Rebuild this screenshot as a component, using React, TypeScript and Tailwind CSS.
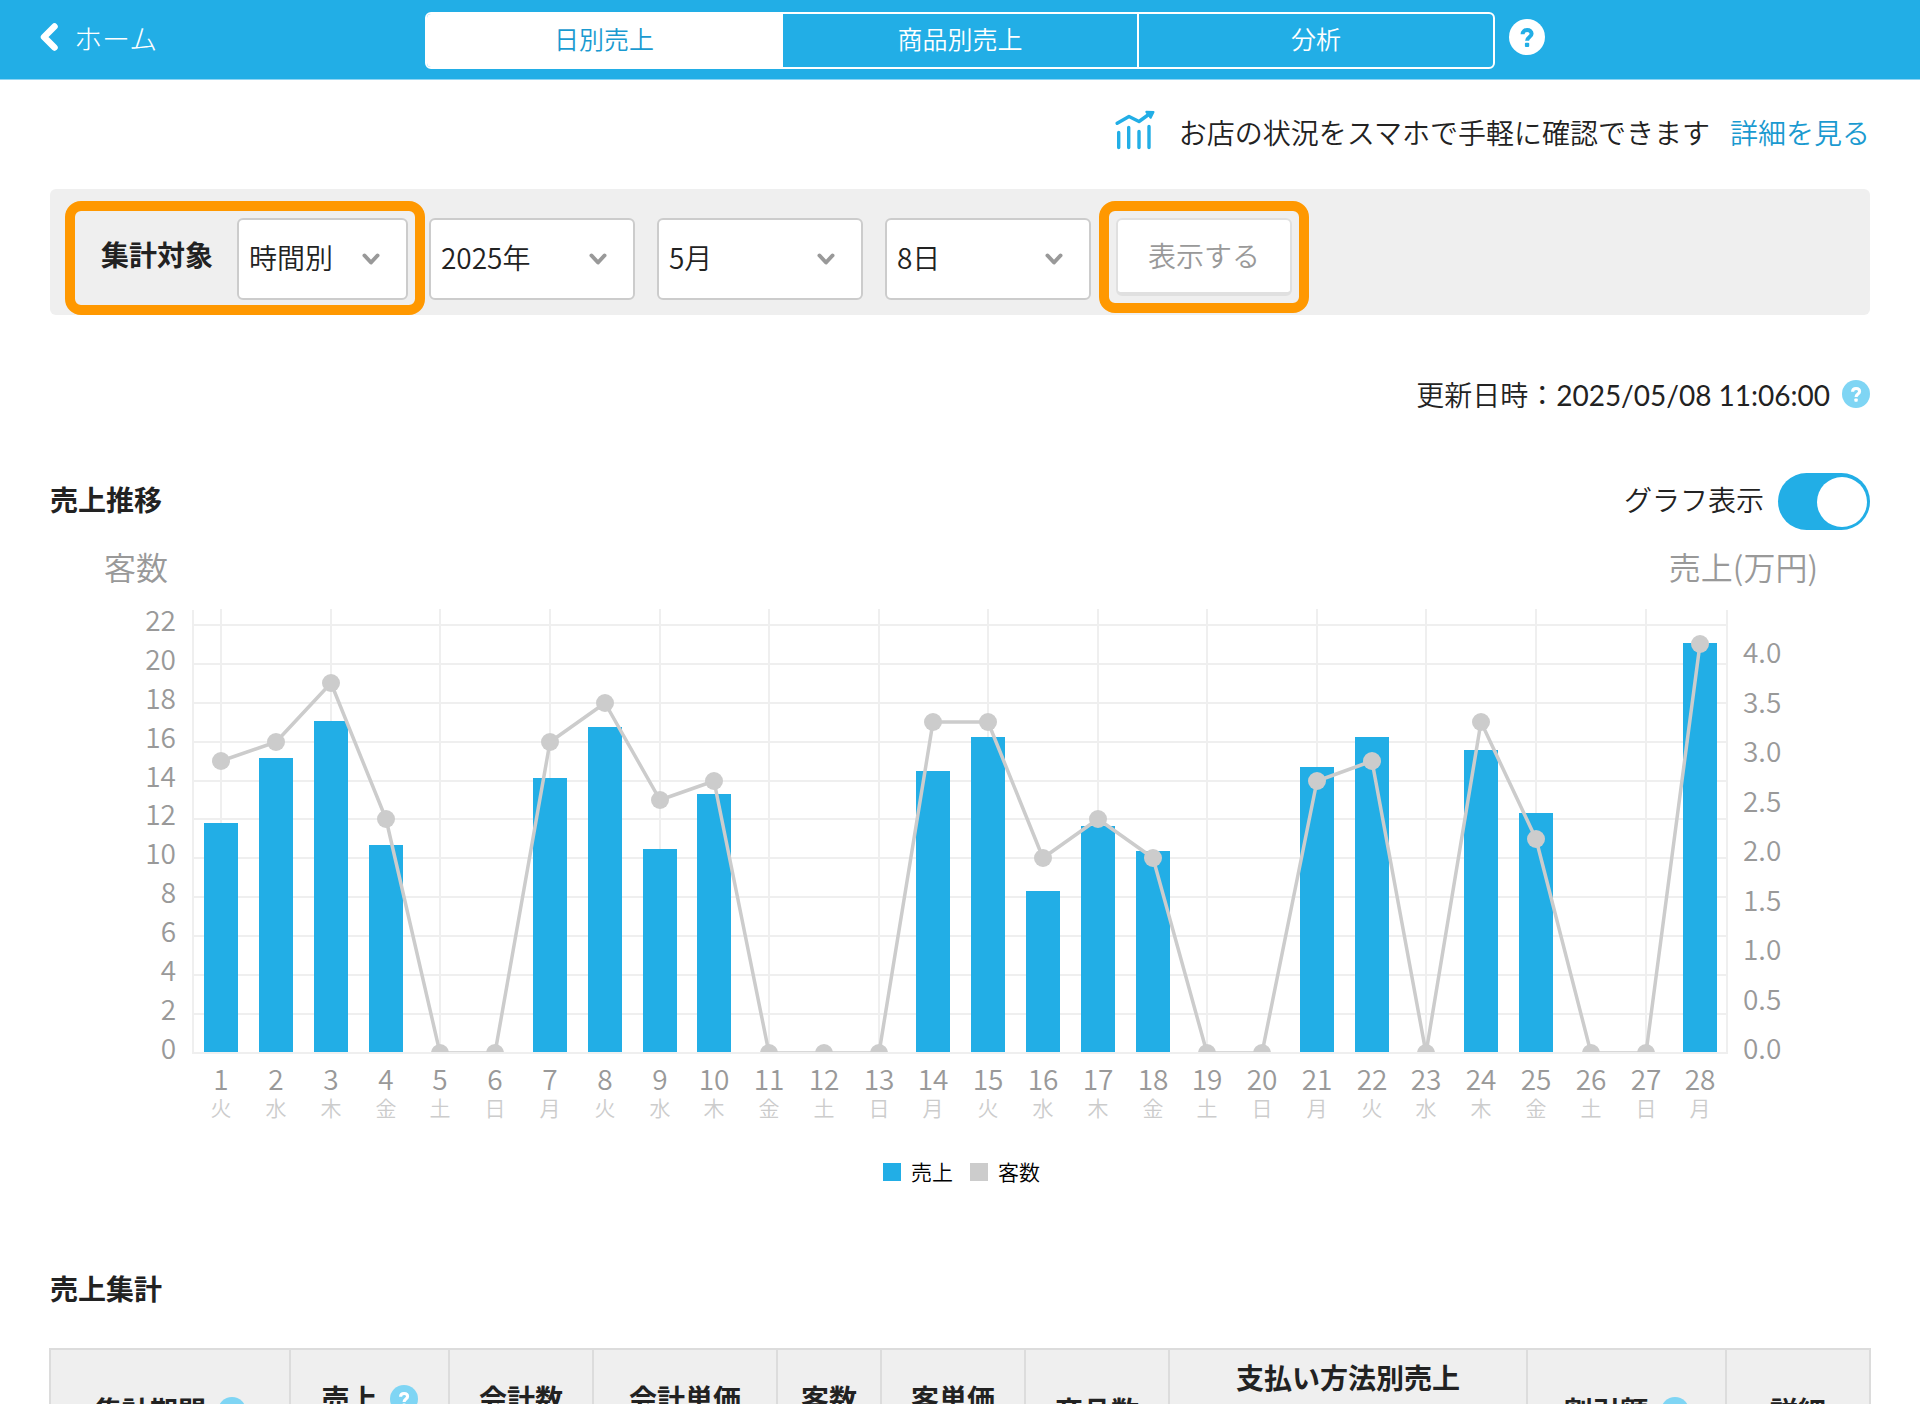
import { useState } from "react";

const bars: (number | null)[] = [
  2.32, 2.98, 3.35, 2.1, null, null, 2.78, 3.29, 2.06, 2.62, null, null, null, 2.85, 3.19, 1.64, 2.29, 2.04,
  null, null, 2.89, 3.19, null, 3.06, 2.42, null, null, 4.14,
];
const guests = [
  15, 16, 19, 12, 0, 0, 16, 18, 13, 14, 0, 0, 0, 17, 17, 10, 12, 10, 0, 0, 14, 15, 0, 17, 11, 0, 0, 21,
];
const weekdays = ["火", "水", "木", "金", "土", "日", "月"];

const BASE = 513;
const dayX = (i: number) => Math.round(171.3 + i * 54.78);
const guestY = (n: number) => Math.round(BASE - n * 19.46);
const salesY = (v: number) => Math.round(BASE - v * 99);

function Help({ className, fg }: { className: string; fg: string }) {
  return (
    <button type="button" aria-label="ヘルプ" className={`block shrink-0 rounded-full ${className}`}>
      <svg viewBox="0 0 36 36" className="block size-full" fill="none">
        <path
          d="M13.6 15.2c0-2.6 1.9-4.2 4.5-4.2s4.500 1.500 4.500 3.800c0 3.200-4.500 3.200-4.500 6.900"
          stroke={fg}
          strokeWidth="4"
        />
        <rect x="15.9" y="23.800" width="4.300" height="4.300" rx="1" fill={fg} />
      </svg>
    </button>
  );
}

function Picker({ label, value, options, className }: { label: string; value: string; options: string[]; className: string }) {
  return (
    <div className={`relative ${className}`}>
      <select
        aria-label={label}
        defaultValue={value}
        className="h-[82px] w-full appearance-none rounded-md border-2 border-[#ccc] bg-white pr-12 pb-[5px] pl-[10px] font-['Noto_Sans_CJK_JP',sans-serif] text-[28px] text-[#222]"
      >
        {options.map((o) => (
          <option key={o}>{o}</option>
        ))}
      </select>
      <svg
        viewBox="0 0 18 14"
        className="pointer-events-none absolute top-[34px] right-7 h-[14px] w-[18px]"
        fill="none"
        stroke="#999"
        strokeWidth="4"
        strokeLinecap="round"
        strokeLinejoin="round"
      >
        <path d="M2.500 3.500 9 10.500 15.500 3.500" />
      </svg>
    </div>
  );
}

function Chart() {
  const points = guests.map((g, i) => `${dayX(i)},${guestY(g)}`).join(" ");
  return (
    <svg
      viewBox="0 0 1820 660"
      className="block w-full font-['Noto_Sans_CJK_JP',sans-serif]"
      role="img"
      aria-label="売上推移グラフ"
    >
      <defs>
        <clipPath id="plot">
          <rect x="140" y="60" width="1540" height="452" />
        </clipPath>
      </defs>
      <g fill="#999" fontSize="32">
        <text x="54" y="40">客数</text>
        <text x="1768" y="40" textAnchor="end">売上(万円)</text>
      </g>
      <g stroke="#efefef" strokeWidth="2" fill="none">
        {Array.from({ length: 11 }, (_, i) => (
          <path key={i} d={`M143 ${guestY(2 + i * 2)}H1677`} />
        ))}
        {guests.map((_, i) => (i % 2 === 0 ? <path key={i} d={`M${dayX(i)} 69V512`} /> : null))}
        <path d="M143 70V513H1677V70" />
      </g>
      <g clipPath="url(#plot)">
        {bars.map((v, i) =>
          v === null ? null : (
            <rect key={i} x={dayX(i) - 17} y={salesY(v)} width="34" height={BASE - salesY(v)} fill="#22aee6" />
          ),
        )}
        <polyline points={points} fill="none" stroke="#ccc" strokeWidth="3.500" strokeLinejoin="round" />
        {guests.map((g, i) => (
          <circle key={i} cx={dayX(i)} cy={guestY(g)} r="9" fill="#ccc" />
        ))}
      </g>
      <g fill="#999" fontSize="28">
        {Array.from({ length: 12 }, (_, i) => (
          <text key={i} x="126" y={guestY(i * 2) + 6} textAnchor="end">{i * 2}</text>
        ))}
        {Array.from({ length: 9 }, (_, i) => (
          <text key={i} x="1693" y={salesY(i / 2) + 6}>{(i / 2).toFixed(1)}</text>
        ))}
        {guests.map((_, i) => (
          <text key={i} x={dayX(i)} y="550" textAnchor="middle">{i + 1}</text>
        ))}
      </g>
      <g fill="#ccc" fontSize="21" textAnchor="middle">
        {guests.map((_, i) => (
          <text key={i} x={dayX(i)} y="576">{weekdays[i % 7]}</text>
        ))}
      </g>
      <g fontSize="21" fill="#000">
        <rect x="833" y="623" width="18" height="18" fill="#22aee6" />
        <text x="861" y="640">売上</text>
        <rect x="920" y="623" width="18" height="18" fill="#ccc" />
        <text x="948" y="640">客数</text>
      </g>
    </svg>
  );
}

const columns = [
  { name: "集計期間", help: true, col: "w-[240px]", cell: "" },
  { name: "売上", help: true, col: "w-[159px]", cell: "pb-6" },
  { name: "会計数", help: false, col: "w-[144px]", cell: "pb-6" },
  { name: "会計単価", help: false, col: "w-[184px]", cell: "pb-6" },
  { name: "客数", help: false, col: "w-[104px]", cell: "pb-6" },
  { name: "客単価", help: false, col: "w-[144px]", cell: "pb-6" },
  { name: "商品数", help: false, col: "w-[144px]", cell: "" },
  { name: "支払い方法別売上", help: false, col: "w-[358px]", cell: "pb-[66px]" },
  { name: "割引額", help: true, col: "w-[199px]", cell: "" },
  { name: "詳細", help: false, col: "w-[144px]", cell: "" },
];

const tabs = ["日別売上", "商品別売上", "分析"];

export default function App() {
  const [tab, setTab] = useState(0);
  const [graph, setGraph] = useState(true);
  return (
    <div className="h-screen overflow-y-auto bg-white font-[Lato,'Noto_Sans_CJK_JP',sans-serif] text-[28px] leading-[42px] font-[350] text-[#222] [scrollbar-width:none]">
      <header className="grid h-20 grid-cols-[1fr_1070px_1fr] items-start border-b border-[#8fd5f3] bg-[#22aee6]">
        <a href="#home" className="flex items-center pt-4 pl-10 font-light text-white">
          <svg viewBox="0 0 18 28" className="mr-4 mb-[2px] h-7 w-[18px]" fill="none" stroke="#fff" strokeWidth="6.500" strokeLinecap="round" strokeLinejoin="round">
            <path d="M14.500 3.500 4 14l10.500 10.500" />
          </svg>
          <span className="pt-[2px]">ホーム</span>
        </a>
        <nav className="mt-3 flex h-[57px] divide-x-2 divide-white overflow-hidden rounded-md border-2 border-white">
          {tabs.map((t, i) => (
            <button
              key={t}
              type="button"
              onClick={() => setTab(i)}
              className={`flex-1 pb-[2px] text-[25px] leading-none ${tab === i ? "bg-white text-[#1a9ad0]" : "text-white"}`}
            >
              {t}
            </button>
          ))}
        </nav>
        <div className="pt-[19px] pl-[14px]">
          <Help className="size-9 bg-white" fg="#22aee6" />
        </div>
      </header>

      <main className="px-[50px]">
        <div className="flex h-[109px] items-center justify-end">
          <svg viewBox="0 0 40 40" className="mr-6 mb-[10px] size-10" fill="none" stroke="#22aee6" strokeWidth="3.400" strokeLinecap="round" strokeLinejoin="round">
            <path d="M3.700 22.500v15M13.700 17.500v20M24 21.500v16M34 16.500v21" />
            <path d="M2.200 13.300 14 6.500 24 11.500 33 5" />
            <path d="M31.300 1.800 38.500 2 35.700 7.800Z" fill="#22aee6" strokeWidth="2" />
          </svg>
          <p className="mr-5 mb-1">お店の状況をスマホで手軽に確認できます</p>
          <a href="#detail" className="mb-1 text-[#1a9ad0]">詳細を見る</a>
        </div>

        <form className="flex h-[126px] items-start rounded-md bg-[#efefef] pt-3 pl-[15px]" onSubmit={(e) => e.preventDefault()}>
          <div className="flex h-[114px] items-start rounded-2xl border-10 border-[#ff9800] pt-[7px] pr-[7px] pl-[26px]">
            <span className="w-[136px] pt-4 font-bold">集計対象</span>
            <Picker label="集計対象" value="時間別" options={["時間別", "日別", "月別"]} className="w-[171px]" />
          </div>
          <div className="mt-[17px] ml-1 flex gap-[22px]">
            <Picker label="年" value="2025年" options={["2024年", "2025年"]} className="w-[206px]" />
            <Picker label="月" value="5月" options={["4月", "5月", "6月"]} className="w-[206px]" />
            <Picker label="日" value="8日" options={["7日", "8日", "9日"]} className="w-[206px]" />
          </div>
          <div className="ml-2 h-[112px] rounded-2xl border-10 border-[#ff9800] p-[7px]">
            <button type="submit" className="h-[78px] w-[176px] rounded-md border-2 border-b-4 border-[#e0e0e0] bg-white text-[#999]">
              表示する
            </button>
          </div>
        </form>

        <div className="mt-[58px] flex h-[42px] items-center justify-end gap-3">
          <p className="pt-[2px]">
            更新日時：<time className="font-normal">2025/05/08 11:06:00</time>
          </p>
          <Help className="size-7 bg-[#7fd5f4]" fg="#fff" />
        </div>

        <div className="mt-[58px] flex h-[57px] items-center justify-between">
          <h2 className="pb-1 font-bold">売上推移</h2>
          <label className="flex items-center gap-[14px]">
            <span className="pb-1">グラフ表示</span>
            <input
              type="checkbox"
              role="switch"
              checked={graph}
              onChange={(e) => setGraph(e.target.checked)}
              className="flex h-[57px] w-[92px] appearance-none items-center rounded-full bg-[#ccc] px-[3px] before:block before:size-[50px] before:rounded-full before:bg-white checked:justify-end checked:bg-[#22aee6]"
            />
          </label>
        </div>

        <div className="mt-[10px]">{graph && <Chart />}</div>

        <h2 className="mt-[68px] font-bold">売上集計</h2>
        <div className="-mx-px">
          <table className="mt-[38px] w-full table-fixed border-collapse bg-[#efefef]">
            <thead>
              <tr>
                {columns.map((c) => (
                  <th key={c.name} scope="col" className={`h-[124px] border-2 border-[#dcdcdc] ${c.col} ${c.cell}`}>
                    <span className="flex items-center justify-center gap-3">
                      {c.name}
                      {c.help && <Help className="size-7 bg-[#7fd5f4]" fg="#fff" />}
                    </span>
                  </th>
                ))}
              </tr>
            </thead>
          </table>
        </div>
      </main>
    </div>
  );
}
